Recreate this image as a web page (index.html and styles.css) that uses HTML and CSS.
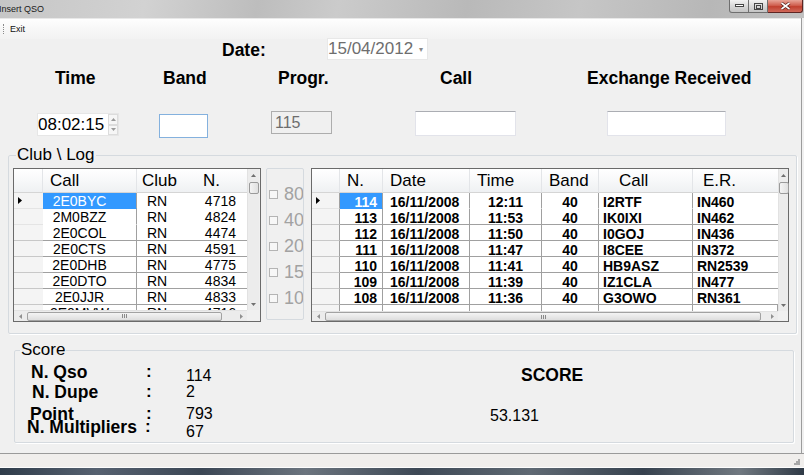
FILE: index.html
```html
<!DOCTYPE html>
<html>
<head>
<meta charset="utf-8">
<title>Insert QSO</title>
<link rel="stylesheet" href="styles.css">
</head>
<body>
<div class="window">
  <div class="titlebar">
    <span class="title">Insert QSO</span>
    <div class="caption-buttons">
      <span class="cb cb-min"><svg width="9" height="4" viewBox="0 0 9 4"><rect x="0.5" y="0.5" width="8" height="2" fill="#fff" stroke="#444"/></svg></span>
      <span class="cb cb-max"><svg width="9" height="7" viewBox="0 0 9 7"><rect x="0.5" y="0.5" width="8" height="6" fill="none" stroke="#444"/><rect x="2.5" y="2.5" width="4" height="3" fill="none" stroke="#444"/></svg></span>
      <span class="cb cb-close"><svg width="11" height="8" viewBox="0 0 11 8"><path d="M1.5 1L9.5 7M9.5 1L1.5 7" stroke="#4a1a16" stroke-width="3"/><path d="M1.5 1L9.5 7M9.5 1L1.5 7" stroke="#fff" stroke-width="1.6"/></svg></span>
    </div>
  </div>
  <div class="frame">
    <div class="menubar"><span class="grip"></span><span class="menu-item">Exit</span></div>
    <div class="client">
      <div class="date-row">
        <span class="lbl">Date:</span>
        <div class="combo"><span class="combo-text">15/04/2012</span><span class="combo-arrow">&#9662;</span></div>
      </div>
      <div class="labels-row">
        <span class="lbl">Time</span>
        <span class="lbl">Band</span>
        <span class="lbl">Progr.</span>
        <span class="lbl">Call</span>
        <span class="lbl">Exchange Received</span>
      </div>
      <div class="inputs-row">
        <div class="tb tb-time"><span class="tb-text">08:02:15</span>
          <span class="spin"><span class="spin-btn"><svg width="5" height="3" viewBox="0 0 5 3"><path d="M0 3L2.5 0L5 3Z" fill="#9a9a9a"/></svg></span><span class="spin-btn"><svg width="5" height="3" viewBox="0 0 5 3"><path d="M0 0L2.5 3L5 0Z" fill="#9a9a9a"/></svg></span></span>
        </div>
        <div class="tb tb-band"></div>
        <div class="tb tb-progr"><span class="tb-text">115</span></div>
        <div class="tb tb-call"></div>
        <div class="tb tb-er"></div>
      </div>

      <fieldset class="group club-group">
        <legend>Club \ Log</legend>
        <div class="group-body">
          <div class="dgv dgv-club">
            <div class="dgv-cells">
              <div class="dgv-row dgv-head club-cols">
                <span class="c rh"></span><span class="c h-call">Call</span><span class="c h-club">Club</span><span class="c h-n">N.</span>
              </div>
              <div class="dgv-row club-cols noline">
                <span class="c rh"><svg class="cur" width="4" height="7" viewBox="0 0 4 7"><path d="M0 0L4 3.5L0 7Z" fill="#000"/></svg></span><span class="c d-call sel">2E0BYC</span><span class="c d-club">RN</span><span class="c d-n">4718</span>
              </div>
              <div class="dgv-row club-cols noline">
                <span class="c rh"></span><span class="c d-call">2M0BZZ</span><span class="c d-club">RN</span><span class="c d-n">4824</span>
              </div>
              <div class="dgv-row club-cols">
                <span class="c rh"></span><span class="c d-call">2E0COL</span><span class="c d-club">RN</span><span class="c d-n">4474</span>
              </div>
              <div class="dgv-row club-cols">
                <span class="c rh"></span><span class="c d-call">2E0CTS</span><span class="c d-club">RN</span><span class="c d-n">4591</span>
              </div>
              <div class="dgv-row club-cols">
                <span class="c rh"></span><span class="c d-call">2E0DHB</span><span class="c d-club">RN</span><span class="c d-n">4775</span>
              </div>
              <div class="dgv-row club-cols">
                <span class="c rh"></span><span class="c d-call">2E0DTO</span><span class="c d-club">RN</span><span class="c d-n">4834</span>
              </div>
              <div class="dgv-row club-cols">
                <span class="c rh"></span><span class="c d-call">2E0JJR</span><span class="c d-club">RN</span><span class="c d-n">4833</span>
              </div>
              <div class="dgv-row club-cols">
                <span class="c rh"></span><span class="c d-call">2E0MVW</span><span class="c d-club">RN</span><span class="c d-n">4716</span>
              </div>
            </div>
            <div class="vscroll">
              <span class="arrow"><svg width="5" height="3" viewBox="0 0 5 3"><path d="M0 3L2.5 0L5 3Z" fill="#707070"/></svg></span>
              <span class="vthumb"></span>
              <span class="vtrack"></span>
              <span class="arrow"><svg width="5" height="3" viewBox="0 0 5 3"><path d="M0 0L2.5 3L5 0Z" fill="#707070"/></svg></span>
            </div>
            <div class="hscroll">
              <span class="harrow"><svg width="3" height="5" viewBox="0 0 3 5"><path d="M3 0L0 2.5L3 5Z" fill="#909090"/></svg></span>
              <span class="hthumb club-thumb"><span class="hgrip"></span></span>
              <span class="htrack"></span>
              <span class="harrow"><svg width="3" height="5" viewBox="0 0 3 5"><path d="M0 0L3 2.5L0 5Z" fill="#909090"/></svg></span>
            </div>
            <div class="corner"></div>
          </div>

          <div class="bands">
            <label class="band"><span class="chk"></span>80</label>
            <label class="band"><span class="chk"></span>40</label>
            <label class="band"><span class="chk"></span>20</label>
            <label class="band"><span class="chk"></span>15</label>
            <label class="band"><span class="chk"></span>10</label>
          </div>

          <div class="dgv dgv-log">
            <div class="dgv-cells">
              <div class="dgv-row dgv-head log-cols">
                <span class="c rh"></span><span class="c lh-n">N.</span><span class="c lh-date">Date</span><span class="c lh-time">Time</span><span class="c lh-band">Band</span><span class="c lh-call">Call</span><span class="c lh-er">E.R.</span>
              </div>
              <div class="dgv-row log-cols noline">
                <span class="c rh"><svg class="cur" width="4" height="7" viewBox="0 0 4 7"><path d="M0 0L4 3.5L0 7Z" fill="#000"/></svg></span><span class="c l-n sel">114</span><span class="c l-date">16/11/2008</span><span class="c l-time">12:11</span><span class="c l-band">40</span><span class="c l-call">I2RTF</span><span class="c l-er">IN460</span>
              </div>
              <div class="dgv-row log-cols">
                <span class="c rh"></span><span class="c l-n">113</span><span class="c l-date">16/11/2008</span><span class="c l-time">11:53</span><span class="c l-band">40</span><span class="c l-call">IK0IXI</span><span class="c l-er">IN462</span>
              </div>
              <div class="dgv-row log-cols">
                <span class="c rh"></span><span class="c l-n">112</span><span class="c l-date">16/11/2008</span><span class="c l-time">11:50</span><span class="c l-band">40</span><span class="c l-call">I0GOJ</span><span class="c l-er">IN436</span>
              </div>
              <div class="dgv-row log-cols">
                <span class="c rh"></span><span class="c l-n">111</span><span class="c l-date">16/11/2008</span><span class="c l-time">11:47</span><span class="c l-band">40</span><span class="c l-call">I8CEE</span><span class="c l-er">IN372</span>
              </div>
              <div class="dgv-row log-cols">
                <span class="c rh"></span><span class="c l-n">110</span><span class="c l-date">16/11/2008</span><span class="c l-time">11:41</span><span class="c l-band">40</span><span class="c l-call">HB9ASZ</span><span class="c l-er">RN2539</span>
              </div>
              <div class="dgv-row log-cols">
                <span class="c rh"></span><span class="c l-n">109</span><span class="c l-date">16/11/2008</span><span class="c l-time">11:39</span><span class="c l-band">40</span><span class="c l-call">IZ1CLA</span><span class="c l-er">IN477</span>
              </div>
              <div class="dgv-row log-cols">
                <span class="c rh"></span><span class="c l-n">108</span><span class="c l-date">16/11/2008</span><span class="c l-time">11:36</span><span class="c l-band">40</span><span class="c l-call">G3OWO</span><span class="c l-er">RN361</span>
              </div>
              <div class="dgv-row log-cols">
                <span class="c rh"></span><span class="c"></span><span class="c"></span><span class="c"></span><span class="c"></span><span class="c"></span><span class="c"></span>
              </div>
            </div>
            <div class="vscroll">
              <span class="arrow"><svg width="5" height="3" viewBox="0 0 5 3"><path d="M0 3L2.5 0L5 3Z" fill="#707070"/></svg></span>
              <span class="vthumb"></span>
              <span class="vtrack"></span>
              <span class="arrow"><svg width="5" height="3" viewBox="0 0 5 3"><path d="M0 0L2.5 3L5 0Z" fill="#707070"/></svg></span>
            </div>
            <div class="hscroll">
              <span class="harrow"><svg width="3" height="5" viewBox="0 0 3 5"><path d="M3 0L0 2.5L3 5Z" fill="#909090"/></svg></span>
              <span class="hthumb log-thumb"><span class="hgrip"></span></span>
              <span class="htrack"></span>
              <span class="harrow"><svg width="3" height="5" viewBox="0 0 3 5"><path d="M0 0L3 2.5L0 5Z" fill="#909090"/></svg></span>
            </div>
            <div class="corner"></div>
          </div>
        </div>
      </fieldset>

      <fieldset class="group score-group">
        <legend>Score</legend>
        <div class="score-grid">
          <span class="s-lbl off4">N. Qso</span><span class="s-colon">:</span><span class="s-val v1">114</span><span class="s-title">SCORE</span>
          <span class="s-lbl off5">N. Dupe</span><span class="s-colon">:</span><span class="s-val">2</span><span></span>
          <span class="s-lbl off3">Point</span><span class="s-colon">:</span><span class="s-val">793</span><span class="s-total">53.131</span>
          <span class="s-lbl">N. Multipliers</span><span class="s-colon c4">:</span><span class="s-val v4">67</span><span></span>
        </div>
      </fieldset>
    </div>
  </div>
  <div class="statusbar"><span class="size-grip"><svg width="6" height="6" viewBox="0 0 6 6"><rect x="4" y="0" width="2" height="2" fill="#a8a8a8"/><rect x="2" y="2" width="2" height="2" fill="#a8a8a8"/><rect x="4" y="2" width="2" height="2" fill="#a8a8a8"/><rect x="0" y="4" width="2" height="2" fill="#a8a8a8"/><rect x="2" y="4" width="2" height="2" fill="#a8a8a8"/><rect x="4" y="4" width="2" height="2" fill="#a8a8a8"/></svg></span></div>
  <div class="taskbar"></div>
</div>
</body>
</html>
```
FILE: styles.css
```css
* { box-sizing: border-box; }

body {
  margin: 0;
  width: 804px;
  height: 475px;
  overflow: hidden;
  background: #f0f0f0;
  font-family: "Liberation Sans", Arial, sans-serif;
  color: #000;
}

.window {
  display: flex;
  flex-direction: column;
  height: 475px;
}

/* Title bar */
.titlebar {
  height: 18px;
  flex: none;
  display: flex;
  justify-content: space-between;
  align-items: flex-start;
  background: linear-gradient(100deg, #c6c6c6 0%, #d2d2d2 18%, #bdbdbd 32%, #cbcbcb 42%, #b9b9b9 58%, #c6c6c6 72%, #b7b7b7 88%, #c1c1c1 100%);
}
.title {
  font-size: 9px;
  line-height: 9px;
  margin: 5px 0 0 -1px;
  color: #1a1a1a;
}
.caption-buttons {
  display: flex;
  margin-right: 1px;
}
.cb {
  height: 13px;
  width: 19px;
  display: flex;
  align-items: center;
  justify-content: center;
  border: 1px solid #6f6f6f;
  border-top: none;
  border-left: none;
  background: linear-gradient(#f2f2f2, #d8d8d8 50%, #c4c4c4);
}
.cb-min {
  width: 20px;
  border-left: 1px solid #6f6f6f;
  border-bottom-left-radius: 3px;
}
.cb-close {
  width: 35px;
  border-color: #5e2522;
  background: linear-gradient(#e8a598, #d06050 45%, #c1402f 55%, #d0695a);
  border-bottom-right-radius: 3px;
}

/* Frame */
.frame {
  flex: 1;
  display: flex;
  flex-direction: column;
  margin-right: 2px;
  border-right: 1px solid #9c9c9c;
}

.menubar {
  height: 21px;
  flex: none;
  display: flex;
  align-items: center;
  background: linear-gradient(#fefefe, #f6f6f6 60%, #f2f2f2);
  border-top: 1px solid #e8e8e8;
}
.grip {
  width: 1px;
  height: 10px;
  margin-left: 3px;
  border-left: 1px dotted #8a8a8a;
}
.menu-item {
  font-size: 9px;
  margin-left: 6px;
  color: #111;
}

.client {
  flex: 1;
}

.lbl {
  font-weight: bold;
  font-size: 17.5px;
  line-height: 20px;
  white-space: nowrap;
}

.date-row {
  height: 21px;
  display: grid;
  grid-template-columns: 105px 101px;
  padding-left: 222px;
  align-items: center;
}
.combo {
  height: 22px;
  margin-top: -1px;
  background: #fff;
  border: 1px solid #e8e8e8;
  display: flex;
  align-items: center;
  justify-content: space-between;
  padding: 0 4px 0 0;
}
.combo-text {
  font-size: 17px;
  color: #6e6e6e;
  line-height: 20px;
}
.combo-arrow {
  font-size: 8px;
  color: #8a8a8a;
}

.labels-row {
  margin-top: 8px;
  display: grid;
  grid-template-columns: 108px 115px 162px 147px auto;
  padding-left: 55px;
}

.inputs-row {
  margin-top: 23px;
  height: 27px;
  display: grid;
  grid-template-columns: 122px 112px 144px 192px auto;
  padding-left: 37px;
  align-items: start;
}
.tb {
  height: 25px;
  background: #fff;
  border: 1px solid #e2e3ea;
  border-top-color: #abadb3;
  display: flex;
  align-items: center;
}
.tb-text {
  font-size: 17px;
  line-height: 20px;
}
.tb-time {
  width: 82px;
  height: 23px;
  margin-top: 2px;
  padding-left: 0;
  justify-content: space-between;
  border-color: #e6e6e6;
}
.spin {
  width: 10px;
  height: 21px;
  display: flex;
  flex-direction: column;
}
.spin-btn {
  flex: 1;
  display: flex;
  align-items: center;
  justify-content: center;
  border: 1px solid #dcdcdc;
  background: #f6f6f6;
}
.tb-band {
  width: 49px;
  height: 24px;
  margin-top: 3px;
  border: 1px solid #84b1de;
}
.tb-progr {
  width: 61px;
  height: 23px;
  background: #f0f0f0;
  border: 1px solid #adadad;
  padding-left: 3px;
}
.tb-progr .tb-text {
  color: #6d6d6d;
  font-size: 16px;
}
.tb-call { width: 101px; }
.tb-er { width: 119px; }

/* Group boxes */
.group {
  min-inline-size: 0;
  border: 1px solid #d5dadf;
  border-radius: 2px;
  box-shadow: 1px 1px 0 #fff;
}
.group legend {
  font-size: 17px;
  line-height: 14px;
  padding: 0 1px;
}
.club-group {
  margin: 10px 4px 0 8px;
  padding: 6px 0 11px 4px;
}
.club-group legend { margin-left: 3px; }

.group-body {
  display: flex;
  align-items: flex-start;
}

/* Data grids */
.dgv {
  height: 154px;
  border: 1px solid #6a6a6a;
  background: #f0f0f0;
  display: grid;
}
.dgv-club {
  width: 248px;
  grid-template-columns: 233px 12px;
  grid-template-rows: 141px 11px;
}
.dgv-log {
  width: 478px;
  margin-left: 7px;
  grid-template-columns: 466px 10px;
  grid-template-rows: 142px 10px;
}
.dgv-cells {
  overflow: hidden;
  background: #fff;
}
.dgv-row {
  display: grid;
  height: 16px;
}
.club-cols { grid-template-columns: 29px 94px 53px 57px; }
.log-cols { grid-template-columns: 28px 43px 87px 72px 57px 94px 85px; }

.c {
  white-space: nowrap;
  overflow: hidden;
  font-size: 14px;
  line-height: 16px;
  border-bottom: 1px solid #a0a0a0;
}
.noline .c { border-bottom-color: transparent; }
.c.rh {
  background: #f4f4f4;
  border-bottom-color: #c8c8c8;
  display: flex;
  align-items: center;
  padding-left: 4px;
}
.noline .c.rh { border-bottom-color: #e4e4e4; }

.dgv-head {
  height: 24px;
  background: linear-gradient(#ffffff, #f7f8f9 50%, #eef0f2);
}
.dgv-head .c {
  font-size: 17px;
  line-height: 24px;
  border-bottom: 1px solid #d5d5d5;
  border-right: 1px solid #e3e5e8;
}
.dgv-head .c.rh {
  background: transparent;
  border-bottom-color: #d5d5d5;
}

/* Club grid */
.h-call { padding-left: 7px; }
.h-club { padding-left: 5px; border-right: none !important; }
.h-n { padding-left: 13px; border-right: none !important; }
.d-call {
  text-align: center;
  padding-right: 20px;
  border-right: 1px solid #a0a0a0;
}
.d-club { padding-left: 10px; }
.d-n { text-align: right; padding-right: 11px; }
.sel {
  background: #3399ff;
  color: #fff;
}
.cur { display: block; }

/* Log grid */
.dgv-log .c:not(.rh) { font-weight: bold; border-right: 1px solid #a0a0a0; padding-top: 1px; }
.dgv-log .dgv-head .c { font-weight: normal; border-right: 1px solid #e3e5e8; padding-top: 0; }
.dgv-log .dgv-head .c.lh-er { border-right: none; }
.dgv-log .c.rh { border-right: 1px solid #a0a0a0; }
.dgv-log .dgv-head .c.rh { border-right: 1px solid #e3e5e8; }
.lh-n, .lh-date, .lh-time { padding-left: 7px; }
.lh-band { padding-left: 7px; }
.lh-call { padding-left: 20px; }
.lh-er { padding-left: 10px; }
.l-n { text-align: right; padding-right: 5px; }
.l-date { padding-left: 7px; }
.l-time, .l-band { text-align: center; }
.l-call, .l-er { padding-left: 4px; }
.dgv-log .c.l-er { border-right: none; }

/* Scrollbars */
.vscroll {
  display: flex;
  flex-direction: column;
  align-items: center;
  background: #ececec;
  border-left: 1px solid #e2e2e2;
}
.arrow {
  height: 12px;
  width: 100%;
  flex: none;
  display: flex;
  align-items: center;
  justify-content: center;
}
.vthumb {
  width: 10px;
  height: 12px;
  flex: none;
  border: 1px solid #9a9a9a;
  border-radius: 2px;
  background: linear-gradient(90deg, #f4f4f4, #e0e0e0);
  margin-top: 1px;
}
.vtrack { flex: 1; }
.hscroll {
  display: flex;
  align-items: center;
  background: #ececec;
  border-top: 1px solid #e2e2e2;
}
.harrow {
  width: 12px;
  height: 100%;
  flex: none;
  display: flex;
  align-items: center;
  justify-content: center;
}
.hthumb {
  height: 9px;
  flex: none;
  border: 1px solid #a2a2a2;
  border-radius: 2px;
  background: linear-gradient(#f4f4f4, #dedede);
  display: flex;
  align-items: center;
  justify-content: center;
  margin-left: 1px;
}
.club-thumb { width: 195px; }
.log-thumb { width: 436px; }
.hgrip {
  width: 5px;
  height: 4px;
  border-left: 1px solid #8a8a8a;
  border-right: 1px solid #8a8a8a;
  background: linear-gradient(90deg, transparent 1px, #8a8a8a 1px, #8a8a8a 2px, transparent 2px);
}
.htrack { flex: 1; }
.corner { background: #f0f0f0; }

/* Band checkboxes */
.bands {
  width: 38px;
  height: 152px;
  margin-left: 5px;
  border: 1px solid #d5dadf;
  border-radius: 2px;
  padding-top: 12px;
  display: flex;
  flex-direction: column;
  overflow: hidden;
}
.band {
  height: 26px;
  display: flex;
  align-items: center;
  padding-left: 2px;
  font-size: 18px;
  color: #a2a2a2;
  white-space: nowrap;
}
.chk {
  width: 9px;
  height: 9px;
  flex: none;
  border: 1px solid #b4b4b4;
  background: #f7f7f7;
  margin-right: 6px;
}

/* Score */
.score-group {
  margin: 9px 7px 0 14px;
  padding: 8px 0 8px 12px;
}
.score-group legend { margin-left: -7px; }
.score-grid {
  display: grid;
  grid-template-columns: 119px 40px 304px auto;
  grid-template-rows: 20px 22px 13px 14px;
  align-items: start;
}
.s-lbl {
  font-weight: bold;
  font-size: 17.5px;
  line-height: 14px;
  white-space: nowrap;
}
.off3 { padding-left: 3px; }
.off4 { padding-left: 4px; }
.off5 { padding-left: 5px; }
.s-colon {
  font-weight: bold;
  font-size: 17px;
  line-height: 14px;
}
.s-val {
  font-size: 16px;
  line-height: 14px;
}
.v1 { padding-top: 4px; }
.v4 { padding-top: 5px; }
.c4 { margin-left: -1px; }
.s-title {
  font-weight: bold;
  font-size: 17.5px;
  line-height: 14px;
  padding-left: 31px;
  padding-top: 3px;
}
.s-total {
  font-size: 16px;
  line-height: 14px;
  padding-top: 2px;
}

/* Status bar and taskbar */
.statusbar {
  height: 15px;
  flex: none;
  background: #f0eeec;
  border-top: 1px solid #9a9a9a;
  border-bottom: 1px solid #fdfdfd;
  display: flex;
  justify-content: flex-end;
  align-items: flex-end;
  padding: 0 4px 2px 0;
}
.size-grip { display: flex; }
.taskbar {
  height: 7px;
  flex: none;
  background: linear-gradient(90deg, #2f3c4a 0%, #566170 12%, #3b4654 25%, #6b747e 38%, #3d4855 52%, #5f6973 66%, #36414e 80%, #707880 92%, #2f3a46 100%);
}
```
